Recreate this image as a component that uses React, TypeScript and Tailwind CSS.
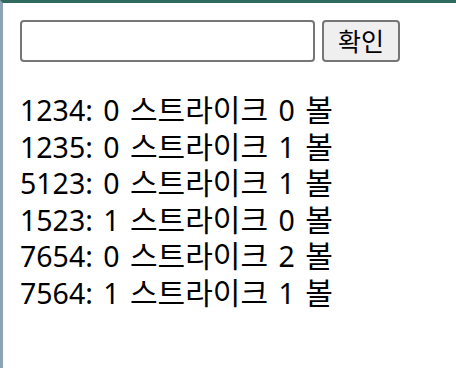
import React from 'react';

const RESULTS: [string, number, number][] = [
  ['1234', 0, 0],
  ['1235', 0, 1],
  ['5123', 0, 1],
  ['1523', 1, 0],
  ['7654', 0, 2],
  ['7564', 1, 1],
];

export default function App() {
  return (
    <div
      className="w-[456px] h-[368px] overflow-hidden bg-white border-t-[3px] border-t-[#2f6b5e] border-l-[3px] border-l-[#8ca3b3] text-black"
      style={{ fontFamily: '"Noto Sans", "Noto Sans CJK KR", sans-serif' }}
    >
      <div className="pl-[17px] pt-[17px]">
        <div className="flex items-center gap-[7px]">
          <input
            type="text"
            className="w-[295px] h-[42px] border-2 border-[#767676] rounded-[4px] bg-white px-2 outline-none"
          />
          <button className="w-[78px] h-[42px] border-2 border-[#767676] rounded-[4px] bg-[#efefef] text-[25px] leading-none">
            확인
          </button>
        </div>
        <div className="mt-[30px] text-[28.5px] leading-[36.6px] [word-spacing:3px]">
          {RESULTS.map(([guess, s, b]) => (
            <div key={guess} className="h-[36.6px]">
              {guess}: {s}{' '}
              <span className="inline-block text-[30px] leading-[30px]">스트라이크</span> {b}{' '}
              <span className="inline-block text-[30px] leading-[30px]">볼</span>
            </div>
          ))}
        </div>
      </div>
    </div>
  );
}
